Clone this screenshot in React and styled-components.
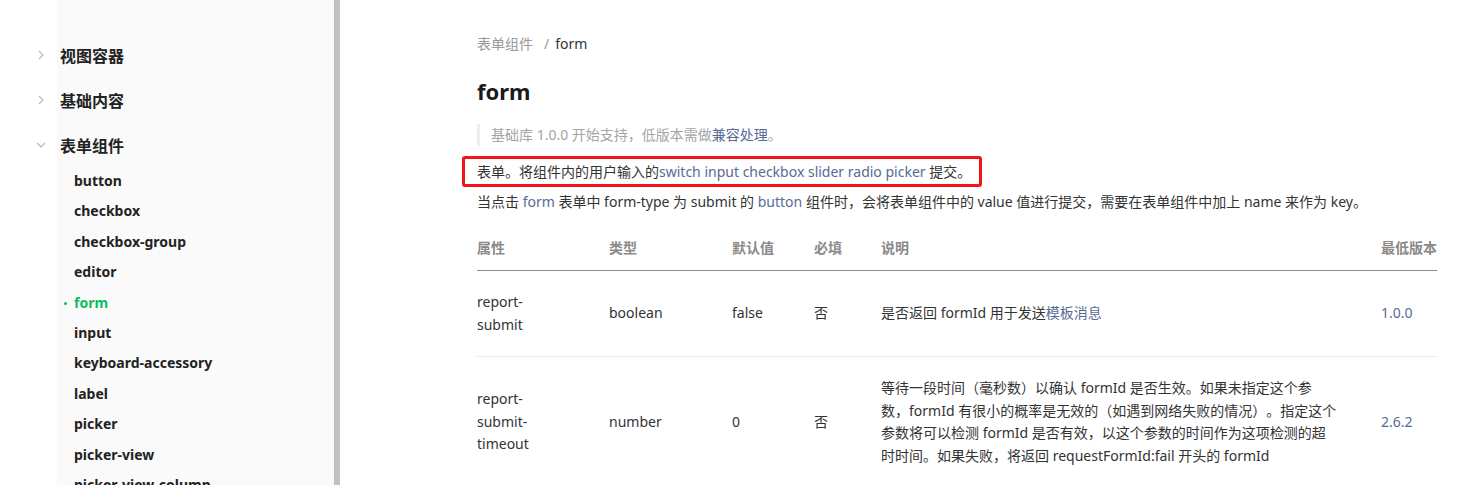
import React from 'react';
import styled, { createGlobalStyle } from 'styled-components';

const GlobalStyle = createGlobalStyle`
  html, body {
    margin: 0;
    padding: 0;
    height: 485px;
    overflow: hidden;
    background: #fff;
  }
  body {
    font-family: "Noto Sans", "Noto Sans CJK SC", sans-serif;
    color: #333;
    text-spacing-trim: space-all;
    -webkit-font-smoothing: antialiased;
  }
`;

const Page = styled.div`
  display: flex;
  height: 485px;
  overflow: hidden;
`;

const Aside = styled.aside`
  display: flex;
  flex: 0 0 340px;
  padding-left: 57px;
  box-sizing: border-box;
  background: #fff;
`;

const Nav = styled.nav`
  flex: 1;
  background: #fafafa;
  padding-top: 32px;
`;

const Scrollbar = styled.div`
  flex: 0 0 6px;
  background: #c1c1c1;
`;

const Category = styled.div`
  display: flex;
  align-items: center;
  height: 45px;
  margin-left: -22px;
  font-size: 16px;
  font-weight: 600;
  color: #222;
`;

const Chevron = styled.span`
  display: inline-flex;
  justify-content: center;
  width: 12px;
  margin-right: 13px;
  color: #b5b5b5;
`;

const SubList = styled.ul`
  list-style: none;
  margin: -1px 0 0;
  padding: 0 0 0 17px;
`;

const SubItem = styled.li`
  position: relative;
  height: 30.4px;
  line-height: 30.4px;
  font-size: 14px;
  font-weight: 700;
  color: ${p => (p.$active ? '#07c160' : '#222')};
  &::before {
    content: '';
    display: ${p => (p.$active ? 'block' : 'none')};
    position: absolute;
    left: -10px;
    top: 14px;
    width: 3px;
    height: 3px;
    border-radius: 50%;
    background: #07c160;
  }
`;

const Main = styled.main`
  flex: 1;
  padding: 33px 0 0 137px;
  font-size: 14px;
`;

const Content = styled.div`
  width: 960px;
`;

const Crumbs = styled.div`
  display: flex;
  align-items: center;
  line-height: 22px;
  color: #999;
`;

const Sep = styled.span`
  margin: 0 6px 0 11px;
`;

const Current = styled.span`
  color: #333;
`;

const Title = styled.h1`
  margin: 21px 0 0;
  font-size: 22px;
  line-height: 30px;
  font-weight: 700;
  color: #1a1a1a;
`;

const Note = styled.blockquote`
  margin: 18px 0 0;
  padding-left: 11px;
  border-left: 3px solid #eee;
  line-height: 22px;
  color: #a5a5a5;
`;

const Link = styled.span`
  color: #576b95;
`;

const Para = styled.p`
  position: relative;
  margin: ${p => (p.$first ? '15px' : '8px')} 0 0;
  line-height: 22px;
  color: #333;
  width: ${p => (p.$marked ? 'fit-content' : 'auto')};
  &::after {
    content: '';
    display: ${p => (p.$marked ? 'block' : 'none')};
    position: absolute;
    left: -15px;
    right: -11px;
    top: -5px;
    bottom: -4px;
    border: 3px solid #f2161b;
    border-radius: 3px;
  }
`;

const Table = styled.table`
  width: 960px;
  margin-top: 10px;
  border-collapse: collapse;
  table-layout: fixed;
`;

const Th = styled.th`
  padding: 14px 0 11px;
  text-align: left;
  font-weight: 700;
  color: #8a8a8a;
  line-height: 22px;
  border-bottom: 1px solid #8c8c8c;
`;

const Td = styled.td`
  padding: 20px ${p => p.$pr || 0}px 20px 0;
  line-height: 22.5px;
  color: #333;
  vertical-align: middle;
  border-bottom: 1px solid #e8e8e8;
  word-wrap: break-word;
`;

const Version = styled(Td)`
  color: #576b95;
`;

function ChevronRight() {
  return (
    <svg width="6" height="10" viewBox="0 0 6 10" fill="none">
      <path d="M1 1l4 4-4 4" stroke="currentColor" strokeWidth="1.1" />
    </svg>
  );
}

function ChevronDown() {
  return (
    <svg width="10" height="6" viewBox="0 0 10 6" fill="none">
      <path d="M1 1l4 4 4-4" stroke="currentColor" strokeWidth="1.1" />
    </svg>
  );
}

const subItems = [
  'button',
  'checkbox',
  'checkbox-group',
  'editor',
  'form',
  'input',
  'keyboard-accessory',
  'label',
  'picker',
  'picker-view',
  'picker-view-column',
];

const cols = [132, 123, 82, 67, 500, 56];

export default function App() {
  return (
    <>
      <GlobalStyle />
      <Page>
        <Aside>
          <Nav>
            <Category>
              <Chevron><ChevronRight /></Chevron>视图容器
            </Category>
            <Category>
              <Chevron><ChevronRight /></Chevron>基础内容
            </Category>
            <Category>
              <Chevron><ChevronDown /></Chevron>表单组件
            </Category>
            <SubList>
              {subItems.map(name => (
                <SubItem key={name} $active={name === 'form'}>{name}</SubItem>
              ))}
            </SubList>
          </Nav>
          <Scrollbar />
        </Aside>
        <Main>
          <Content>
            <Crumbs>
              <span>表单组件</span>
              <Sep>/</Sep>
              <Current>form</Current>
            </Crumbs>
            <Title>form</Title>
            <Note>
              基础库 1.0.0 开始支持，低版本需做<Link>兼容处理</Link>。
            </Note>
            <Para $first $marked>
              表单。将组件内的用户输入的<Link>switch</Link> <Link>input</Link> <Link>checkbox</Link>{' '}
              <Link>slider</Link> <Link>radio</Link> <Link>picker</Link> 提交。
            </Para>
            <Para>
              当点击 <Link>form</Link> 表单中 form-type 为 submit 的 <Link>button</Link>{' '}
              组件时，会将表单组件中的 value 值进行提交，需要在表单组件中加上 name 来作为 key。
            </Para>
            <Table>
              <colgroup>
                {cols.map((w, i) => (
                  <col key={i} style={{ width: w }} />
                ))}
              </colgroup>
              <thead>
                <tr>
                  <Th>属性</Th>
                  <Th>类型</Th>
                  <Th>默认值</Th>
                  <Th>必填</Th>
                  <Th>说明</Th>
                  <Th>最低版本</Th>
                </tr>
              </thead>
              <tbody>
                <tr>
                  <Td $pr={50}>report-submit</Td>
                  <Td>boolean</Td>
                  <Td>false</Td>
                  <Td>否</Td>
                  <Td $pr={43}>
                    是否返回 formId 用于发送<Link>模板消息</Link>
                  </Td>
                  <Version>1.0.0</Version>
                </tr>
                <tr>
                  <Td $pr={50}>report-submit-timeout</Td>
                  <Td>number</Td>
                  <Td>0</Td>
                  <Td>否</Td>
                  <Td $pr={43}>
                    等待一段时间（毫秒数）以确认 formId 是否生效。如果未指定这个参数，formId
                    有很小的概率是无效的（如遇到网络失败的情况）。指定这个参数将可以检测 formId
                    是否有效，以这个参数的时间作为这项检测的超时时间。如果失败，将返回
                    requestFormId:fail 开头的 formId
                  </Td>
                  <Version>2.6.2</Version>
                </tr>
              </tbody>
            </Table>
          </Content>
        </Main>
      </Page>
    </>
  );
}
